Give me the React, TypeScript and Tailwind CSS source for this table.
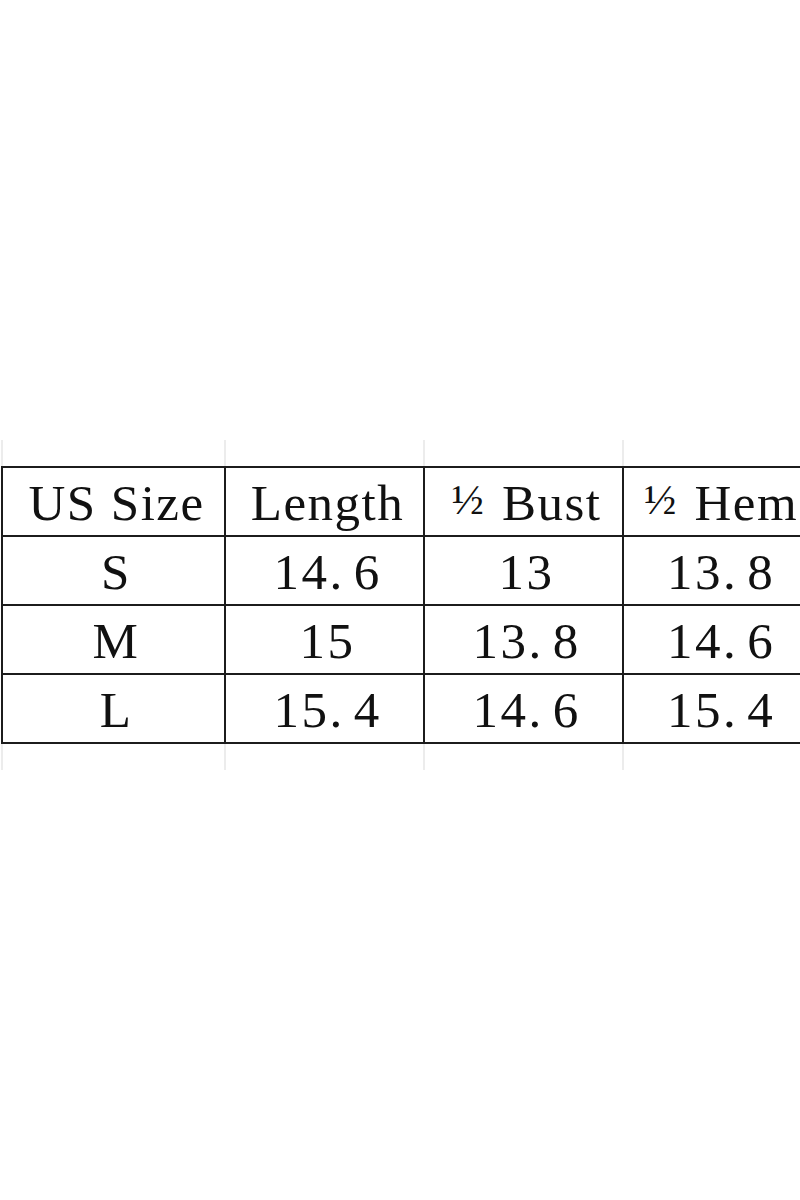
const headers = ["US Size", "Length", "½ Bust", "½ Hem"];

const rows = [
  ["S", "14.6", "13", "13.8"],
  ["M", "15", "13.8", "14.6"],
  ["L", "15.4", "14.6", "15.4"],
];

// the dot in the source font sits left in a wide cell, so give it a trailing gap
const Value = ({ text }: { text: string }) => {
  const dot = text.indexOf(".");
  if (dot < 0) return <>{text}</>;
  return (
    <>
      {text.slice(0, dot)}
      <span className="mr-[9px]">.</span>
      {text.slice(dot + 1)}
    </>
  );
};

// the fraction glyph is smaller and sits a little above the baseline
const Header = ({ text }: { text: string }) => {
  if (!text.startsWith("½")) return <>{text}</>;
  return (
    <>
      <span className="text-[43px] align-[6px] mr-[4px] tracking-normal">½</span>
      {text.slice(1)}
    </>
  );
};

const Cell = ({ children, head }: { children: React.ReactNode; head?: boolean }) => (
  <div className="h-[69px] border-l-2 border-t-2 border-[#1c1c1c] flex items-center justify-center pl-[6px] pt-[4px]">
    <span
      className={`whitespace-pre text-[51px] leading-none text-[#111] font-['Liberation_Serif',serif] ${
        head ? "tracking-[1.5px]" : "tracking-[2.5px]"
      }`}
    >
      {children}
    </span>
  </div>
);

// faint spreadsheet gridlines above and below the table
const GridStrip = ({ h }: { h: string }) => (
  <div className={`grid grid-cols-[223px_199px_199px_190px] ml-px ${h}`}>
    <div className="border-l-2 border-[#ececec]" />
    <div className="border-l-2 border-[#ececec]" />
    <div className="border-l-2 border-[#ececec]" />
    <div className="border-l-2 border-[#ececec]" />
  </div>
);

export default function App() {
  return (
    <div className="w-[800px] h-[1200px] bg-white overflow-hidden">
      <div className="pt-[440px] w-[820px]">
        <GridStrip h="h-[26px]" />
        <div className="ml-px grid grid-cols-[223px_199px_199px_190px] border-b-2 border-[#1c1c1c]">
          {headers.map((h) => (
            <Cell key={h} head>
              <Header text={h} />
            </Cell>
          ))}
          {rows.map((r, i) =>
            r.map((v, j) => (
              <Cell key={`${i}-${j}`}>
                <Value text={v} />
              </Cell>
            ))
          )}
        </div>
        <GridStrip h="h-[26px]" />
      </div>
    </div>
  );
}
